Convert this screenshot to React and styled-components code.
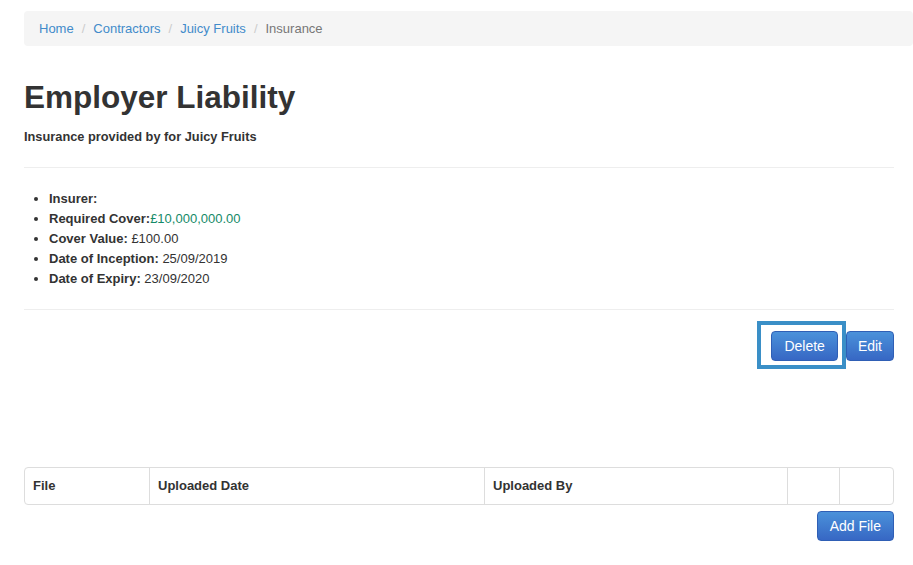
import styled, { createGlobalStyle } from "styled-components";

const GlobalStyle = createGlobalStyle`
  html, body {
    margin: 0;
    padding: 0;
    background: #fff;
  }
  body {
    font-family: "Liberation Sans", Arial, Helvetica, sans-serif;
    font-size: 14px;
    line-height: 20px;
    color: #333;
  }
`;

const Page = styled.div`
  padding: 11px 0 0 24px;
`;

const Breadcrumb = styled.ol`
  list-style: none;
  margin: 0;
  padding: 8px 15px;
  background: #f5f5f5;
  border-radius: 4px;
  display: flex;
  height: 19px;
  align-items: center;
  font-size: 13px;
  li + li::before {
    content: "/";
    color: #ccc;
    padding: 0 8px 0 8px;
  }
`;

const Crumb = styled.li`
  color: ${(p) => (p.$active ? "#777" : "#428bca")};
`;

const Content = styled.div`
  width: 870px;
`;

const Title = styled.h1`
  font-size: 31.5px;
  font-weight: bold;
  line-height: 40px;
  margin: 31px 0 10px;
  color: #333;
`;

const Subtitle = styled.h5`
  font-size: 12.8px;
  font-weight: bold;
  margin: 0;
  line-height: 20px;
`;

const Rule = styled.hr`
  border: 0;
  border-top: 1px solid #eee;
  margin: ${(p) => p.$m || "20px 0"};
`;

const Details = styled.ul`
  margin: 0;
  padding-left: 25px;
  font-size: 13px;
  li {
    line-height: 20px;
  }
  b {
    font-weight: bold;
  }
`;

const Money = styled.span`
  color: #158a68;
`;

const Actions = styled.div`
  display: flex;
  justify-content: flex-end;
  align-items: flex-start;
  gap: 8px;
  padding-top: 1px;
`;

const Highlight = styled.div`
  margin: -11px -8px -8px -14px;
  padding: 6px 4px 4px 10px;
  border: 4px solid #3a8fc7;
  display: flex;
`;

const Button = styled.button`
  font-family: inherit;
  font-size: 14px;
  color: #fff;
  background: linear-gradient(to bottom, #4a91da 0%, #3767c4 100%);
  border: 1px solid #2f5fb5;
  border-radius: 4px;
  padding: 0 ${(p) => p.$px || 12}px;
  height: 30px;
  line-height: 28px;
  cursor: pointer;
`;

const EditButton = styled(Button)`
  margin-top: -1px;
`;

const Spacer = styled.div`
  height: 106px;
`;

const Table = styled.div`
  border: 1px solid #ddd;
  border-radius: 4px;
  display: grid;
  grid-template-columns: 124px 335px 303px 52px 1fr;
  height: 36px;
`;

const Th = styled.div`
  font-weight: bold;
  font-size: 13px;
  padding: 0 8px;
  line-height: 36px;
  & + & {
    border-left: 1px solid #ddd;
  }
`;

const Footer = styled.div`
  display: flex;
  justify-content: flex-end;
  padding-top: 6px;
`;

export default function App() {
  return (
    <>
      <GlobalStyle />
      <Page>
        <Breadcrumb>
          <Crumb>Home</Crumb>
          <Crumb>Contractors</Crumb>
          <Crumb>Juicy Fruits</Crumb>
          <Crumb $active>Insurance</Crumb>
        </Breadcrumb>
        <Content>
          <Title>Employer Liability</Title>
          <Subtitle>Insurance provided by for Juicy Fruits</Subtitle>
          <Rule $m="20px 0 21px" />
          <Details>
            <li><b>Insurer:</b></li>
            <li><b>Required Cover:</b><Money>£10,000,000.00</Money></li>
            <li><b>Cover Value:</b> £100.00</li>
            <li><b>Date of Inception:</b> 25/09/2019</li>
            <li><b>Date of Expiry:</b> 23/09/2020</li>
          </Details>
          <Rule $m="20px 0 21px" />
          <Actions>
            <Highlight>
              <Button>Delete</Button>
            </Highlight>
            <EditButton $px={11}>Edit</EditButton>
          </Actions>
          <Spacer />
          <Table>
            <Th>File</Th>
            <Th>Uploaded Date</Th>
            <Th>Uploaded By</Th>
            <Th />
            <Th />
          </Table>
          <Footer>
            <Button>Add File</Button>
          </Footer>
        </Content>
      </Page>
    </>
  );
}
